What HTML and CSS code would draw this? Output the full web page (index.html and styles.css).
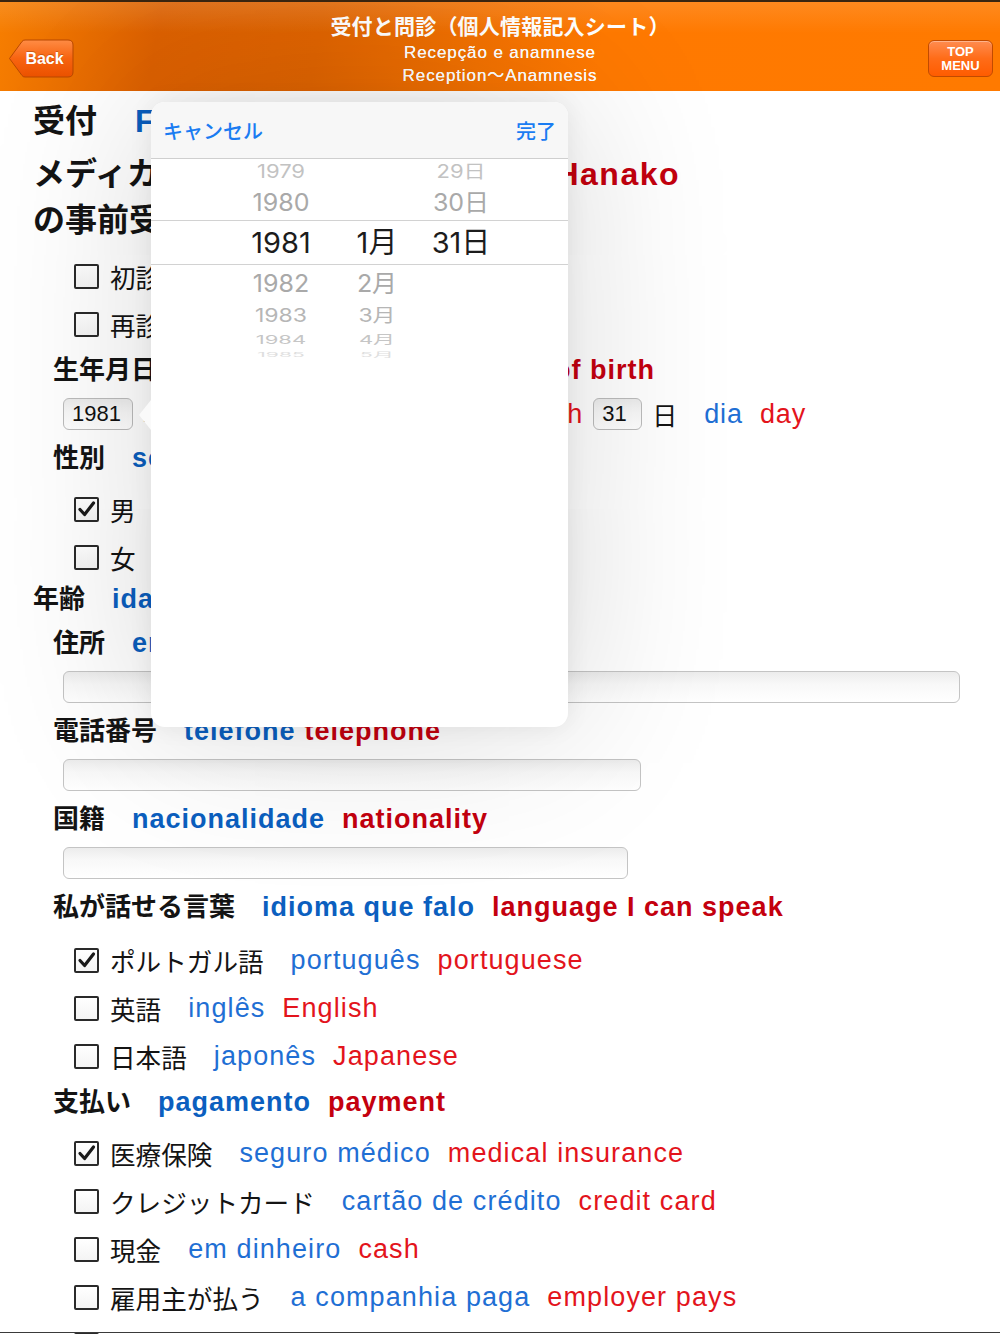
FILE: index.html
```html
<!DOCTYPE html>
<html lang="ja">
<head>
<meta charset="utf-8">
<title>受付と問診</title>
<link rel="stylesheet" href="styles.css">
</head>
<body>
<header class="topbar">
  <div class="bar-left">
    <a class="back">
      <svg class="back-shape" viewBox="0 0 66 39" width="66" height="39">
        <defs>
          <linearGradient id="bg1" x1="0" y1="0" x2="0" y2="1">
            <stop offset="0" stop-color="#ff8c45"/>
            <stop offset="0.5" stop-color="#f86410"/>
            <stop offset="1" stop-color="#ec5200"/>
          </linearGradient>
        </defs>
        <path d="M1.5 19.5 L14 2.5 Q15 1 17 1 H60 Q65 1 65 6 V33 Q65 38 60 38 H17 Q15 38 14 36.5 Z" fill="url(#bg1)" stroke="#b94800" stroke-width="1"/>
      </svg>
      <span class="back-label">Back</span>
    </a>
  </div>
  <div class="titles">
    <div class="t1">受付と問診（個人情報記入シート）</div>
    <div class="t2">Recepção e anamnese</div>
    <div class="t3">Reception〜Anamnesis</div>
  </div>
  <div class="bar-right">
    <a class="topmenu"><span>TOP</span><span>MENU</span></a>
  </div>
</header>

<main class="form">
  <div class="row1"><span class="jp1">受付</span><span class="ptb">Ficha</span><span class="enb">Form</span></div>
  <div class="lead">
    <div class="lead-line"><span class="jp">メディカルアシスタント</span><span class="ptb pt">Yamada</span><span class="enb">Hanako</span></div>
    <div class="lead-line">の事前受付票です</div>
  </div>

  <div class="checks first">
    <div class="check"><span class="box"></span><span class="jp">初診</span><span class="ptr pt">primeira consulta</span><span class="enr">first visit</span></div>
    <div class="check"><span class="box"></span><span class="jp">再診</span><span class="ptr pt">retorno</span><span class="enr">return visit</span></div>
  </div>

  <div class="h"><span class="jp">生年月日</span><span class="ptb wide">data de nascimento</span><span class="enb">date of birth</span></div>
  <div class="daterow">
    <span class="numbox w70">1981</span>
    <span class="dl">年</span><span class="ptr pt">ano</span><span class="enr dm">year</span>
    <span class="numbox w49">1</span>
    <span class="dl">月</span><span class="ptr pt">mês</span><span class="enr dm2">month</span>
    <span class="numbox w49">31</span>
    <span class="dl">日</span><span class="ptr pt">dia</span><span class="enr">day</span>
  </div>

  <div class="h"><span class="jp">性別</span><span class="ptb pt">sexo</span><span class="enb">sex</span></div>
  <div class="checks gap5">
    <div class="check"><span class="box on"><svg viewBox="0 0 21 21" width="21" height="21"><path d="M4 10.5 L8.6 15.5 L17.5 4" fill="none" stroke="#1a1a1a" stroke-width="3.2" stroke-linecap="round" stroke-linejoin="round"/></svg></span><span class="jp">男</span><span class="ptr pt">masculino</span><span class="enr">male</span></div>
    <div class="check"><span class="box"></span><span class="jp">女</span><span class="ptr pt">feminino</span><span class="enr">female</span></div>
  </div>

  <div class="h flush age"><span class="jp">年齢</span><span class="ptb pt">idade</span><span class="enb">age</span></div>
  <div class="h"><span class="jp">住所</span><span class="ptb pt">endereço</span><span class="enb">address</span></div>
  <div class="inputrow"><div class="textbox w897"></div></div>

  <div class="h"><span class="jp">電話番号</span><span class="ptb tight">telefone</span><span class="enb">telephone</span></div>
  <div class="inputrow"><div class="textbox w578"></div></div>

  <div class="h"><span class="jp">国籍</span><span class="ptb pt">nacionalidade</span><span class="enb">nationality</span></div>
  <div class="inputrow"><div class="textbox w565"></div></div>

  <div class="h"><span class="jp">私が話せる言葉</span><span class="ptb pt">idioma que falo</span><span class="enb">language I can speak</span></div>
  <div class="checks gap7">
    <div class="check"><span class="box on"><svg viewBox="0 0 21 21" width="21" height="21"><path d="M4 10.5 L8.6 15.5 L17.5 4" fill="none" stroke="#1a1a1a" stroke-width="3.2" stroke-linecap="round" stroke-linejoin="round"/></svg></span><span class="jp">ポルトガル語</span><span class="ptr pt">português</span><span class="enr">portuguese</span></div>
    <div class="check"><span class="box"></span><span class="jp">英語</span><span class="ptr pt">inglês</span><span class="enr">English</span></div>
    <div class="check"><span class="box"></span><span class="jp">日本語</span><span class="ptr pt">japonês</span><span class="enr">Japanese</span></div>
  </div>

  <div class="h"><span class="jp">支払い</span><span class="ptb pt">pagamento</span><span class="enb">payment</span></div>
  <div class="checks gap5">
    <div class="check"><span class="box on"><svg viewBox="0 0 21 21" width="21" height="21"><path d="M4 10.5 L8.6 15.5 L17.5 4" fill="none" stroke="#1a1a1a" stroke-width="3.2" stroke-linecap="round" stroke-linejoin="round"/></svg></span><span class="jp">医療保険</span><span class="ptr pt">seguro médico</span><span class="enr">medical insurance</span></div>
    <div class="check"><span class="box"></span><span class="jp">クレジットカード</span><span class="ptr pt">cartão de crédito</span><span class="enr">credit card</span></div>
    <div class="check"><span class="box"></span><span class="jp">現金</span><span class="ptr pt">em dinheiro</span><span class="enr">cash</span></div>
    <div class="check"><span class="box"></span><span class="jp">雇用主が払う</span><span class="ptr pt">a companhia paga</span><span class="enr">employer pays</span></div>
    <div class="check"><span class="box"></span><span class="jp">その他</span><span class="ptr pt">outros</span><span class="enr">other</span></div>
  </div>
</main>

<div class="bottomline"></div>

<div class="popover">
  <div class="pop-body">
    <div class="toolbar">
      <span class="tb-btn">キャンセル</span>
      <span class="tb-btn">完了</span>
    </div>
    <div class="picker">
      <div class="col col-y">
        <div class="r r0">1979</div>
        <div class="r r1">1980</div>
        <div class="r r2">1981</div>
        <div class="r r3">1982</div>
        <div class="r r4">1983</div>
        <div class="r r5">1984</div>
        <div class="r r6">1985</div>
      </div>
      <div class="col col-m">
        <div class="r r0"></div>
        <div class="r r1"></div>
        <div class="r r2">1月</div>
        <div class="r r3">2月</div>
        <div class="r r4">3月</div>
        <div class="r r5">4月</div>
        <div class="r r6">5月</div>
      </div>
      <div class="col col-d">
        <div class="r r0">29日</div>
        <div class="r r1">30日</div>
        <div class="r r2">31日</div>
      </div>
    </div>
  </div>
</div>
</body>
</html>
```

FILE: styles.css
```css
* { box-sizing: border-box; }
html, body { margin: 0; padding: 0; }
body {
  width: 1000px;
  height: 1334px;
  overflow: hidden;
  position: relative;
  background: #fff;
  font-family: "Liberation Sans", "Noto Sans CJK JP", sans-serif;
  color: #141414;
}

/* ---------- header ---------- */
.topbar {
  height: 91px;
  border-top: 2px solid #3a2510;
  display: grid;
  grid-template-columns: 1fr auto 1fr;
  background:
    linear-gradient(to bottom, rgba(255,255,255,0.12), rgba(255,255,255,0) 35%),
    linear-gradient(100deg, #f77e00 0%, #dc6000 16%, #e06400 32%, #f47200 48%, #ff7900 60%, #ff7a00 100%);
}
.bar-left {
  display: flex;
  align-items: flex-end;
  padding: 0 0 13px 8px;
}
.back {
  position: relative;
  width: 66px;
  height: 39px;
  display: flex;
  align-items: center;
  justify-content: center;
  padding-left: 7px;
  color: #fff;
  font-weight: bold;
  font-size: 16px;
}
.back-shape { position: absolute; left: 0; top: 0; }
.back-label { position: relative; text-shadow: 0 -1px 0 rgba(120,40,0,0.35); }
.titles {
  text-align: center;
  color: #fff;
  padding-top: 8px;
}
.t1 {
  font-family: "Noto Sans CJK JP", sans-serif;
  font-size: 21px;
  font-weight: 700;
  line-height: 30px;
  letter-spacing: 0.2px;
}
.t2, .t3 {
  font-size: 17px;
  letter-spacing: 0.9px;
  text-shadow: 0 0 0.5px #fff;
}
.t2 { line-height: 26px; }
.t3 { line-height: 20px; }
.bar-right {
  display: flex;
  justify-content: flex-end;
  align-items: flex-end;
  padding: 0 7px 14px 0;
}
.topmenu {
  width: 65px;
  height: 37px;
  border: 1px solid #c24a00;
  border-radius: 6px;
  background: linear-gradient(#ff8c50, #ff6c18 50%, #ff5c00);
  box-shadow: inset 0 1px 0 rgba(255,255,255,0.35);
  color: #fff;
  font-weight: bold;
  font-size: 13px;
  line-height: 14px;
  display: flex;
  flex-direction: column;
  align-items: center;
  justify-content: center;
}

/* ---------- form ---------- */
.form { padding-left: 33px; }

.row1 {
  font-size: 32px;
  font-weight: bold;
  line-height: 60px;
  white-space: nowrap;
}
.jp1 { margin-right: 38px; }
.lead {
  font-size: 32px;
  font-weight: bold;
  line-height: 46px;
}
.lead-line { white-space: nowrap; }

.jp { margin-right: 27px; }
.pt { margin-right: 17px; }
.tight { margin-right: 9px; }
.wide { margin-right: 32px; }

.ptb { color: #0b5fbf; letter-spacing: 1.5px; }
.enb { color: #c4000e; letter-spacing: 1.5px; }
.h .ptb, .h .enb { font-size: 27px; letter-spacing: 1px; }
.ptr { color: #1f6fd4; letter-spacing: 1.1px; font-size: 27px; }
.enr { color: #e3141c; letter-spacing: 1.1px; font-size: 27px; }

.h {
  margin-left: 20px;
  height: 44px;
  line-height: 44px;
  font-size: 26px;
  font-weight: bold;
  white-space: nowrap;
}
.h.flush { margin-left: 0; }
.h.age { height: 40px; line-height: 36px; }

.checks.first { margin-top: 9px; }
.checks.gap5 { margin-top: 5px; }
.checks.gap7 { margin-top: 7px; }
.check {
  margin-left: 41px;
  height: 48px;
  display: flex;
  align-items: center;
  font-size: 25.6px;
  white-space: nowrap;
}
.box {
  width: 25px;
  height: 25px;
  flex: none;
  border: 2px solid #2a2a2a;
  border-radius: 2px;
  margin-right: 11px;
  background: linear-gradient(#ffffff, #f4f4f4);
  display: flex;
  align-items: center;
  justify-content: center;
}

.daterow {
  margin-left: 30px;
  height: 44px;
  display: flex;
  align-items: center;
  font-size: 25px;
  white-space: nowrap;
}
.numbox {
  height: 32px;
  border: 1px solid #bcbcbc;
  border-radius: 6px;
  background: linear-gradient(#ececec, #f8f8f8 45%, #fff);
  font-size: 22px;
  line-height: 30px;
  padding-left: 8px;
  color: #111;
  margin-right: 10px;
}
.w70 { width: 70px; }
.w49 { width: 49px; }
.daterow .dl { margin-right: 27px; }
.daterow .ptr, .daterow .enr { letter-spacing: 0.9px; }
.dm { margin-right: 6px; }
.dm2 { margin-right: 10px; }

.inputrow { padding: 6px 0 6px 30px; height: 44px; }
.textbox {
  height: 32px;
  border: 1px solid #c4c4c4;
  border-radius: 6px;
  background: linear-gradient(#ececec, #f8f8f8 40%, #fff);
}
.w897 { width: 897px; }
.w578 { width: 578px; }
.w565 { width: 565px; }

.bottomline {
  position: absolute;
  left: 0;
  right: 0;
  bottom: 1px;
  height: 1px;
  background: #3a3a3a;
}

/* ---------- popover date picker ---------- */
.popover {
  position: absolute;
  left: 151px;
  top: 102px;
  width: 417px;
  height: 625px;
  border-radius: 14px;
  background: #fff;
  box-shadow: 0 0 24px rgba(0,0,0,0.07), 0 0 170px rgba(0,0,0,0.16);
}
.popover::before {
  content: "";
  position: absolute;
  left: -12px;
  top: 298px;
  border-right: 12px solid #fafafa;
  border-top: 15px solid transparent;
  border-bottom: 15px solid transparent;
}
.pop-body {
  height: 100%;
  border-radius: 14px;
  overflow: hidden;
}
.toolbar {
  height: 57px;
  background: #f7f7f7;
  border-bottom: 1px solid #cfcfcf;
  display: flex;
  justify-content: space-between;
  align-items: center;
  padding: 0 12px 0 12px;
  font-family: "Noto Sans CJK JP", sans-serif;
  font-size: 20px;
  font-weight: 500;
  color: #1a7cf2;
}
.picker {
  position: relative;
  display: flex;
  padding-left: 90px;
  font-family: Inter, "Noto Sans CJK JP", sans-serif;
}
.picker::before {
  content: "";
  position: absolute;
  left: 0;
  right: 0;
  top: 61px;
  height: 43px;
  border-top: 1px solid #d2d2d2;
  border-bottom: 1px solid #d2d2d2;
}
.col { display: flex; flex-direction: column; align-items: center; }
.col-y { width: 80px; }
.col-m { width: 60px; margin-left: 26px; }
.col-d { width: 80px; margin-left: 14px; }
.r { white-space: nowrap; text-align: center; }
.r0 { height: 24px; line-height: 24px; font-size: 22px; color: #c2c2c2; transform: scaleY(0.82); }
.r1 { height: 38px; line-height: 38px; font-size: 25px; color: #a9a9a9; transform: scaleY(0.95); }
.r2 { height: 43px; line-height: 43px; font-size: 29px; color: #1c1c1c; }
.r3 { height: 38px; line-height: 38px; font-size: 25px; color: #a9a9a9; transform: scaleY(0.95); }
.r4 { height: 28px; line-height: 28px; font-size: 23px; color: #b6b6b6; transform: scaleY(0.8); }
.r5 { height: 20px; line-height: 20px; font-size: 22px; color: #c6c6c6; transform: scaleY(0.55); }
.r6 { height: 10px; line-height: 10px; font-size: 21px; color: #dedede; transform: scaleY(0.3); }
```
